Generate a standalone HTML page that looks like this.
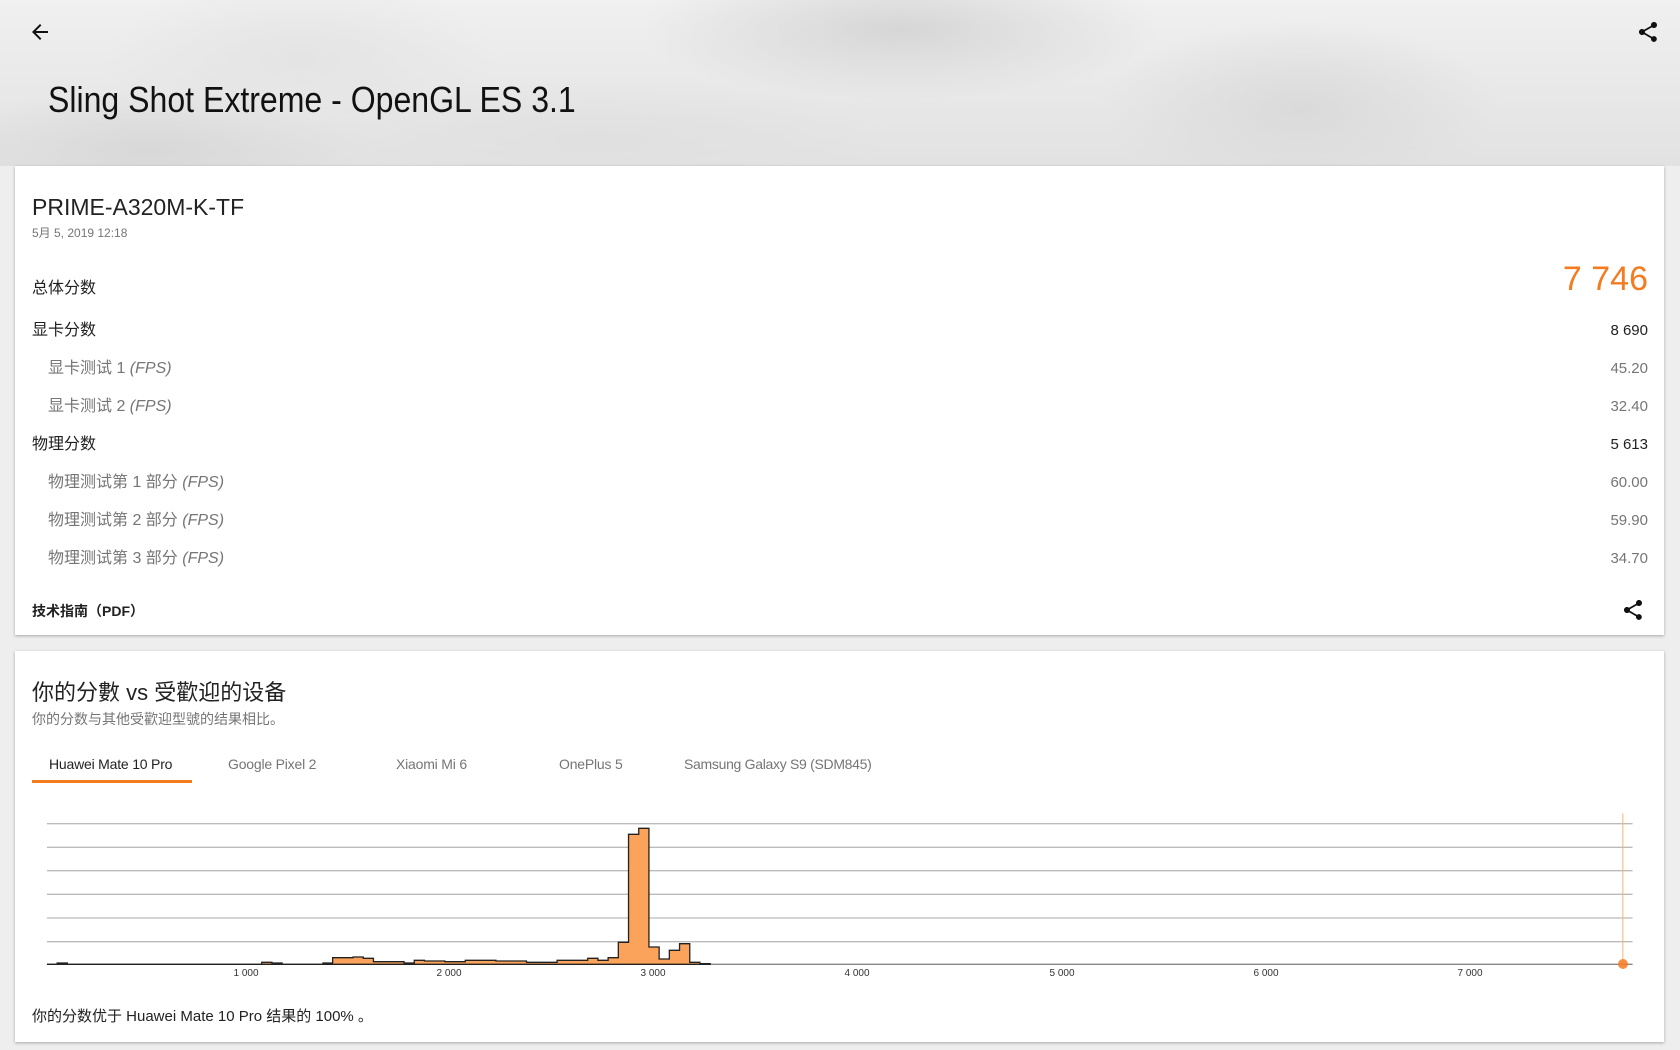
<!DOCTYPE html>
<html><head><meta charset="utf-8"><style>
*{margin:0;padding:0;box-sizing:border-box}
body{width:1680px;height:1050px;background:#eeeeee;font-family:"Liberation Sans","Noto Sans CJK SC",sans-serif;position:relative;overflow:hidden;color:#212121}
.hdr{position:absolute;left:0;top:0;width:1680px;height:166px;background:
radial-gradient(ellipse 200px 80px at 300px 60px,#e4e4e4,transparent),
radial-gradient(ellipse 260px 70px at 900px 30px,#d6d6d6,transparent),
radial-gradient(ellipse 200px 90px at 1300px 110px,#dadada,transparent),
radial-gradient(ellipse 300px 60px at 600px 140px,#e0e0e0,transparent),
radial-gradient(ellipse 220px 60px at 150px 150px,#d8d8d8,transparent),
linear-gradient(180deg,#f0f0f0,#e2e2e2)}
.abs{position:absolute;white-space:nowrap}
.card{position:absolute;left:15px;width:1649px;background:#fff;box-shadow:0 1px 3px rgba(0,0,0,.3)}
.lbl{font-size:16px}
.sub{color:#757575;font-size:16px}
.v{font-size:15px}
.ax{position:absolute;top:968px;font-size:10px;color:#333;transform:translateX(-50%);white-space:nowrap}
</style></head><body>
<div class="hdr"></div>
<svg class="abs" style="left:28px;top:20px" width="24" height="24" viewBox="0 0 24 24"><path d="M20 11H7.8l5.6-5.6L12 4l-8 8 8 8 1.4-1.4L7.8 13H20z" fill="#111"/></svg>
<svg class="abs" style="left:1636px;top:20px" width="24" height="24" viewBox="0 0 24 24"><path d="M18 16.1c-.8 0-1.4.3-2 .8l-7.1-4.2c.1-.2.1-.5.1-.7s0-.5-.1-.7L16 7.2c.5.5 1.2.8 2 .8 1.7 0 3-1.3 3-3s-1.3-3-3-3-3 1.3-3 3c0 .2 0 .5.1.7L8 9.8C7.5 9.3 6.8 9 6 9c-1.7 0-3 1.3-3 3s1.3 3 3 3c.8 0 1.5-.3 2-.8l7.1 4.2c-.1.2-.1.4-.1.6 0 1.6 1.3 2.9 2.9 2.9s2.9-1.3 2.9-2.9-1.3-2.9-2.9-2.9z" fill="#111"/></svg>
<div class="abs" style="left:48px;top:79px;font-size:36px;transform:scaleX(.89);transform-origin:left;color:#111">Sling Shot Extreme - OpenGL ES 3.1</div>

<div class="card" style="top:166px;height:469px">
 <div class="abs" style="left:17px;top:28px;font-size:23px;color:#222">PRIME-A320M-K-TF</div>
 <div class="abs" style="left:17px;top:58px;font-size:12px;color:#757575">5月 5, 2019 12:18</div>
 <div class="abs lbl" style="left:17px;top:108px">总体分数</div>
 <div class="abs" style="right:16px;top:94px;font-size:34px;color:#f47b20">7 746</div>
 <div class="abs lbl" style="left:17px;top:150px">显卡分数</div><div class="abs v" style="right:16px;top:156px">8 690</div>
 <div class="abs sub" style="left:33px;top:188px">显卡测试 1 <i>(FPS)</i></div><div class="abs sub v" style="right:16px;top:194px">45.20</div>
 <div class="abs sub" style="left:33px;top:226px">显卡测试 2 <i>(FPS)</i></div><div class="abs sub v" style="right:16px;top:232px">32.40</div>
 <div class="abs lbl" style="left:17px;top:264px">物理分数</div><div class="abs v" style="right:16px;top:270px">5 613</div>
 <div class="abs sub" style="left:33px;top:302px">物理测试第 1 部分 <i>(FPS)</i></div><div class="abs sub v" style="right:16px;top:308px">60.00</div>
 <div class="abs sub" style="left:33px;top:340px">物理测试第 2 部分 <i>(FPS)</i></div><div class="abs sub v" style="right:16px;top:346px">59.90</div>
 <div class="abs sub" style="left:33px;top:378px">物理测试第 3 部分 <i>(FPS)</i></div><div class="abs sub v" style="right:16px;top:384px">34.70</div>
 <div class="abs" style="left:17px;top:435px;font-size:14px;font-weight:bold">技术指南（PDF）</div>
 <svg class="abs" style="left:1606px;top:432px" width="24" height="24" viewBox="0 0 24 24"><path d="M18 16.1c-.8 0-1.4.3-2 .8l-7.1-4.2c.1-.2.1-.5.1-.7s0-.5-.1-.7L16 7.2c.5.5 1.2.8 2 .8 1.7 0 3-1.3 3-3s-1.3-3-3-3-3 1.3-3 3c0 .2 0 .5.1.7L8 9.8C7.5 9.3 6.8 9 6 9c-1.7 0-3 1.3-3 3s1.3 3 3 3c.8 0 1.5-.3 2-.8l7.1 4.2c-.1.2-.1.4-.1.6 0 1.6 1.3 2.9 2.9 2.9s2.9-1.3 2.9-2.9-1.3-2.9-2.9-2.9z" fill="#111"/></svg>
</div>

<div class="card" style="top:651px;height:391px">
 <div class="abs" style="left:17px;top:24px;font-size:22px;color:#222">你的分數 vs 受歡迎的设备</div>
 <div class="abs" style="left:17px;top:58px;font-size:14px;color:#757575">你的分数与其他受歡迎型號的结果相比。</div>
 <div class="abs" style="left:34px;top:105px;font-size:14px;color:#222;letter-spacing:-.2px">Huawei Mate 10 Pro</div>
 <div class="abs" style="left:213px;top:105px;font-size:14px;color:#757575;letter-spacing:-.2px">Google Pixel 2</div>
 <div class="abs" style="left:381px;top:105px;font-size:14px;color:#757575;letter-spacing:-.2px">Xiaomi Mi 6</div>
 <div class="abs" style="left:544px;top:105px;font-size:14px;color:#757575;letter-spacing:-.2px">OnePlus 5</div>
 <div class="abs" style="left:669px;top:105px;font-size:14px;color:#757575;letter-spacing:-.3px">Samsung Galaxy S9 (SDM845)</div>
 <div class="abs" style="left:17px;top:129px;width:160px;height:3px;background:#f47b20"></div>
 <div class="abs" style="left:17px;top:354px;font-size:15px;color:#222">你的分数优于 Huawei Mate 10 Pro 结果的 100% 。</div>
</div>

<svg class="abs" style="left:0;top:780px" width="1680" height="270" viewBox="0 0 3293 810" preserveAspectRatio="none">
 <g stroke="#bbb" stroke-width="1.3">
  <line x1="92" y1="131" x2="3200" y2="131" vector-effect="non-scaling-stroke"/><line x1="92" y1="202" x2="3200" y2="202" vector-effect="non-scaling-stroke"/><line x1="92" y1="272" x2="3200" y2="272" vector-effect="non-scaling-stroke"/><line x1="92" y1="343" x2="3200" y2="343" vector-effect="non-scaling-stroke"/><line x1="92" y1="414" x2="3200" y2="414" vector-effect="non-scaling-stroke"/><line x1="92" y1="485" x2="3200" y2="485" vector-effect="non-scaling-stroke"/>
 </g>
 <line x1="92" y1="553" x2="3200" y2="553" stroke="#888" stroke-width="1.3" vector-effect="non-scaling-stroke"/>
 <line x1="3181" y1="100" x2="3181" y2="553" stroke="#f9b27a" stroke-width="1" vector-effect="non-scaling-stroke"/>
 <path d="M92 553H112V549H132V553H513V547H533V549H553V553H633V549H652V533H692V531H712V535H732V545H792V549H812V541H832V543H872V545H912V541H972V543H1032V547H1092V541H1152V535H1172V541H1192V533H1212V487H1232V163H1252V145H1272V501H1292V537H1312V511H1332V491H1352V547H1372V551H1392V553Z" fill="#fba35a" stroke="#222" stroke-width="1.3" vector-effect="non-scaling-stroke"/>
</svg>
<div class="abs" style="left:1618px;top:959px;width:10px;height:10px;border-radius:50%;background:#f47b20;opacity:.85"></div>
<div class="ax" style="left:246px">1 000</div><div class="ax" style="left:449px">2 000</div><div class="ax" style="left:653px">3 000</div><div class="ax" style="left:857px">4 000</div><div class="ax" style="left:1062px">5 000</div><div class="ax" style="left:1266px">6 000</div><div class="ax" style="left:1470px">7 000</div>
</body></html>
